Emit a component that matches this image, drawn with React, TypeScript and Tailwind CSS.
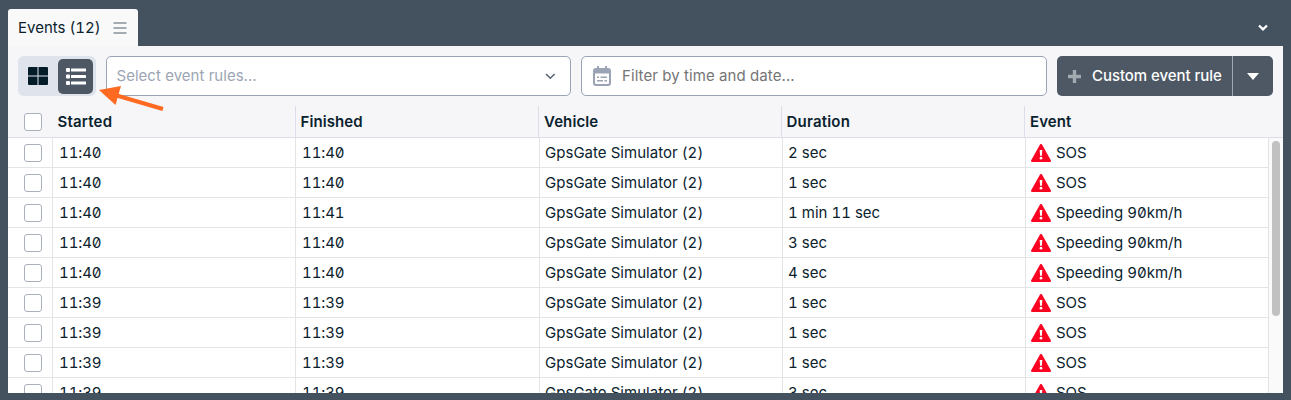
import React from 'react';

const rows: [string, string, string, string][] = [
  ['11:40', '11:40', '2 sec', 'SOS'],
  ['11:40', '11:40', '1 sec', 'SOS'],
  ['11:40', '11:41', '1 min 11 sec', 'Speeding 90km/h'],
  ['11:40', '11:40', '3 sec', 'Speeding 90km/h'],
  ['11:40', '11:40', '4 sec', 'Speeding 90km/h'],
  ['11:39', '11:39', '1 sec', 'SOS'],
  ['11:39', '11:39', '1 sec', 'SOS'],
  ['11:39', '11:39', '1 sec', 'SOS'],
  ['11:39', '11:39', '3 sec', 'SOS'],
];

function Checkbox() {
  return <span className="block size-[18px] rounded-[3px] border-[1.5px] border-[#a9b0bc] bg-white" />;
}

function Warning() {
  return (
    <svg width="20" height="18" viewBox="0 0 20 18" className="shrink-0">
      <path d="M9 .6a1.200 1.200 0 0 1 2 0l8.800 15.600a1.200 1.200 0 0 1-1 1.800H1.200a1.200 1.200 0 0 1-1-1.800z" fill="#fb0421" />
      <path d="M8.700 6h2.600l-.4 5.800H9.100z" fill="#fff" />
      <circle cx="10" cy="14.200" r="1.350" fill="#fff" />
    </svg>
  );
}

function Row({ row }: { row: [string, string, string, string] }) {
  const cell = 'flex items-center border-r border-[#e2e4e6]';
  return (
    <div className="flex h-[30px] w-[1261px] shrink-0 border-b border-[#e2e4e6] bg-white">
      <div className={cell + ' w-[45px] pl-4'}><Checkbox /></div>
      <div className={cell + ' w-[243px] pl-[6px] tracking-[-0.1px] tabular-nums slashed-zero'}>{row[0]}</div>
      <div className={cell + ' w-[244px] pl-[6px] tracking-[-0.1px] tabular-nums slashed-zero'}>{row[1]}</div>
      <div className={cell + ' w-[243px] pl-[5px] tracking-[0.03px] tabular-nums slashed-zero'}>GpsGate Simulator (2)</div>
      <div className={cell + ' w-[243px] pl-[5px] tabular-nums slashed-zero'}>{row[2]}</div>
      <div className={cell + ' w-[243px] gap-[5px] pl-[5px] tabular-nums slashed-zero'}>
        <Warning />
        {row[3]}
      </div>
    </div>
  );
}

export default function App() {
  return (
    <div className="relative flex h-[400px] w-[1291px] flex-col overflow-hidden bg-[#44515e] px-2 pt-[9px] font-['Inter',sans-serif] text-[15px] leading-5 text-[#0a222d]">
      <div className="flex h-[37px] shrink-0 items-end justify-between">
        <div className="flex h-[37px] w-[130px] items-center gap-[12px] rounded-t-[3px] bg-[#f9f9fa] pl-[10px] tabular-nums">
          <span>Events (12)</span>
          <svg width="14" height="12" viewBox="0 0 14 12"><path d="M.5 1h13M.5 6h13M.5 11h13" stroke="#85929b" strokeWidth="1.400" /></svg>
        </div>
        <svg width="10" height="8" viewBox="0 0 10 8" className="mr-[15px] mb-[14px]"><path d="M1 1.500 5 5.300l4-3.800" fill="none" stroke="#fff" strokeWidth="2.300" /></svg>
      </div>
      <div className="flex h-[347px] shrink-0 flex-col overflow-hidden bg-[#f6f6f9]">
        <div className="flex h-[60px] shrink-0 items-center px-[10px]">
          <div className="flex h-10 w-[78px] items-center rounded-[6px] bg-[#dfe3ec] pl-[10px]">
            <svg width="20" height="18" viewBox="0 0 20 18"><path d="M1 0h8.500v8.500H0V1a1 1 0 0 1 1-1zM10.500 0H19a1 1 0 0 1 1 1v7.500h-9.500zM0 9.500h9.500V18H1a1 1 0 0 1-1-1zM10.500 9.500H20V17a1 1 0 0 1-1 1h-8.500z" fill="#041c28" /></svg>
            <div className="ml-[10px] flex size-[35px] items-center justify-center rounded-[5px] bg-[#4d5864]">
              <svg width="20" height="17" viewBox="0 0 20 17" fill="#fff">
                <rect x="0" y="0" width="4" height="4" rx="1" /><rect x="5" y=".5" width="15" height="3" rx=".6" />
                <rect x="0" y="6.500" width="4" height="4" rx="1" /><rect x="5" y="7" width="15" height="3" rx=".6" />
                <rect x="0" y="13" width="4" height="4" rx="1" /><rect x="5" y="13.500" width="15" height="3" rx=".6" />
              </svg>
            </div>
          </div>
          <div className="ml-[10px] flex h-10 w-[465px] items-center justify-between rounded-[5px] border border-[#9aa4b4] bg-white pr-[14px] pl-[9.5px] text-[#9ca5b4]">
            <span className="tracking-[0.03px]">Select event rules...</span>
            <svg width="12" height="8" viewBox="0 0 12 8"><path d="m2 2 4.300 4.300L10.600 2" fill="none" stroke="#56636f" strokeWidth="1.500" /></svg>
          </div>
          <div className="ml-[10px] flex h-10 w-[466px] items-center gap-[11px] rounded-[5px] border border-[#9aa4b4] bg-white pl-[11px] text-[#757575]">
            <svg width="18" height="20" viewBox="0 0 18 20">
              <path d="M5 0v4M13 0v4" stroke="#9aa4b4" strokeWidth="2" />
              <rect x="1" y="3" width="16" height="16" rx="2" fill="none" stroke="#9aa4b4" strokeWidth="2" />
              <path d="M1 3h16v4.500H1z" fill="#9aa4b4" />
              <path d="M4 11.300h2M7.500 11.300H14M4 14.800h6M11.500 14.800H14" stroke="#9aa4b4" strokeWidth="1.600" />
            </svg>
            <span className="tracking-[0.08px]">Filter by time and date...</span>
          </div>
          <div className="ml-[10px] flex h-10 w-[216px] overflow-hidden rounded-[5px] bg-[#4d5864] text-white">
            <div className="flex w-[176px] items-center gap-[11px] border-r border-[#a0a8b1] pl-[11px] font-medium tracking-[-0.05px] whitespace-nowrap">
              <svg width="13" height="13" viewBox="0 0 13 13"><path d="M6.500 0v13M0 6.500h13" stroke="#a3a9b0" strokeWidth="3.400" /></svg>
              Custom event rule
            </div>
            <div className="flex flex-1 items-center justify-center"><svg width="12" height="7" viewBox="0 0 12 7"><path d="M0 0h12L6 7z" fill="#fff" /></svg></div>
          </div>
        </div>
        <div className="flex h-8 shrink-0 border-b border-[#dcdfe9] font-semibold">
          <div className="flex w-[44px] items-center pl-4"><Checkbox /></div>
          <div className="flex w-[244px] items-center border-r border-[#dcdfe9] pl-[5.5px] tracking-[0.2px]">Started</div>
          <div className="flex w-[243px] items-center border-r border-[#dcdfe9] pl-[4.5px] tracking-[0.1px]">Finished</div>
          <div className="flex w-[243px] items-center border-r border-[#dcdfe9] pl-[5px] tracking-[0.1px]">Vehicle</div>
          <div className="flex w-[243px] items-center border-r border-[#dcdfe9] pl-[4.5px] tracking-[0.2px]">Duration</div>
          <div className="flex items-center pl-[5px] tracking-[0.1px]">Event</div>
        </div>
        <div className="flex h-[255px] shrink-0 overflow-hidden">
          <div className="flex h-[255px] w-[1261px] flex-col overflow-hidden">
            {rows.map((row, i) => <Row key={i} row={row} />)}
          </div>
          <div className="flex-1 bg-[#fafafa] pt-[3px] pl-[3px]"><div className="h-[175px] w-2 rounded-full bg-[#c1c1c1]" /></div>
        </div>
      </div>
      <svg width="70" height="30" viewBox="0 0 70 30" className="absolute top-[83px] left-[97px]">
        <path d="M66 26 18 12" stroke="#ff6a22" strokeWidth="4" />
        <path d="M2 7 24 3 18.500 22z" fill="#ff6a22" />
      </svg>
    </div>
  );
}
